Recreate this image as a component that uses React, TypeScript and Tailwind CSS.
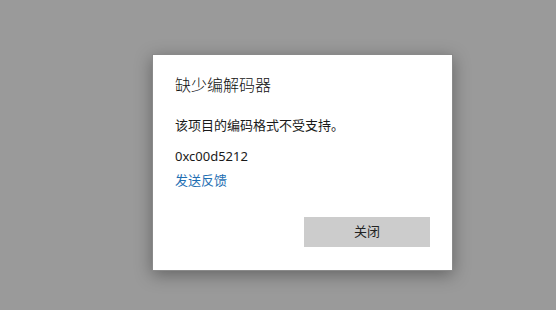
export default function App() {
  return (
    <div
      className="flex h-[310px] w-full bg-[#9a9a9a] pl-[152px] pt-[54px]"
      style={{ fontFamily: '"Noto Sans", "Noto Sans CJK SC", sans-serif' }}
    >
      <div className="flex h-[217px] w-[301px] flex-col border border-[#8a8a8a] bg-white px-[22px] pb-[22px] pt-[19px] shadow-[0_4px_16px_rgba(0,0,0,0.35)]">
        <h1 className="text-[16px] font-light leading-[22px] text-[#111]">缺少编解码器</h1>

        <p className="mt-[19px] text-[13px] leading-[20px] text-[#1a1a1a]">
          该项目的编码格式不受支持。
        </p>

        <p className="mt-[11px] text-[13px] leading-[20px] text-[#1a1a1a]">0xc00d5212</p>

        <a className="mt-[4px] w-fit cursor-pointer text-[13px] leading-[20px] text-[#1f6fb3]">
          发送反馈
        </a>

        <button className="mt-[27px] h-[30px] w-[126px] self-end bg-[#cccccc] text-[13px] text-[#222]">
          关闭
        </button>
      </div>
    </div>
  );
}
